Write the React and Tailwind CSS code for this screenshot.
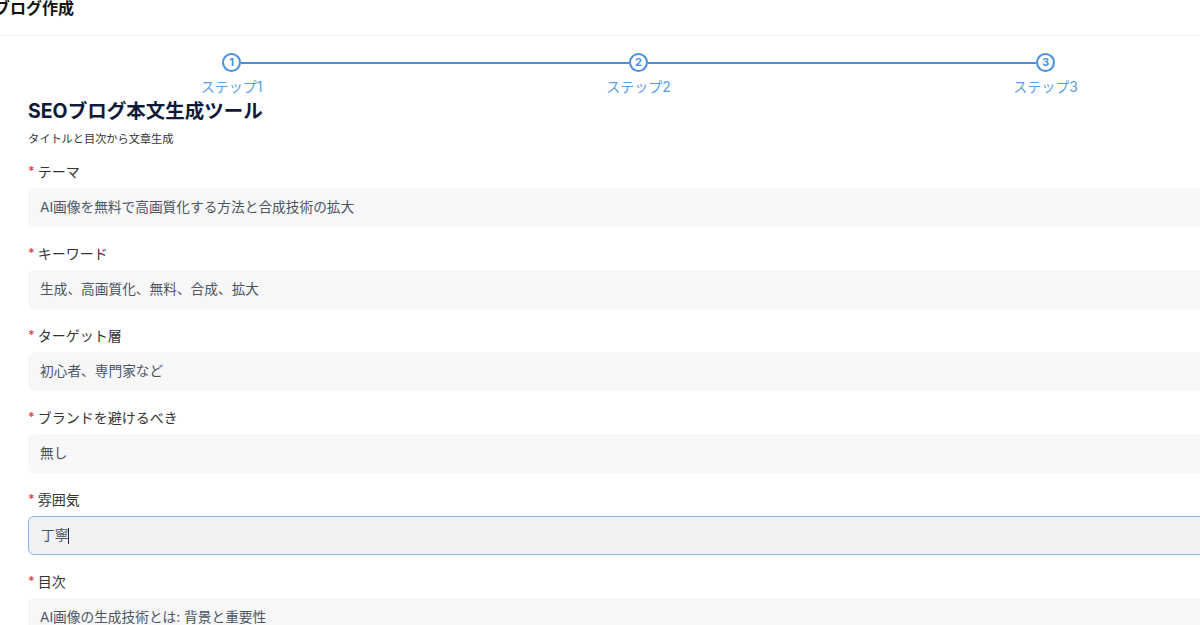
const steps = ["ステップ1", "ステップ2", "ステップ3"];

const fields = [
  { label: "テーマ", value: "AI画像を無料で高画質化する方法と合成技術の拡大" },
  { label: "キーワード", value: "生成、高画質化、無料、合成、拡大" },
  { label: "ターゲット層", value: "初心者、専門家など" },
  { label: "ブランドを避けるべき", value: "無し" },
  { label: "雰囲気", value: "丁寧", focused: true },
  { label: "目次", value: "AI画像の生成技術とは: 背景と重要性" },
];

function Stepper() {
  return (
    <div className="flex pt-[17px]">
      {steps.map((s, i) => (
        <div key={s} className="w-[407px] flex flex-col items-center">
          <div className="w-full flex items-center">
            <div className={i === 0 ? "flex-1" : "flex-1 h-[2px] bg-[#4a90e2]"} />
            <div className="w-[19px] h-[19px] rounded-full border-2 border-[#4a90e2] flex items-center justify-center text-[11px] font-bold text-[#4a90e2] leading-none">
              {i + 1}
            </div>
            <div className={i === steps.length - 1 ? "flex-1" : "flex-1 h-[2px] bg-[#4a90e2]"} />
          </div>
          <div className="mt-[5px] text-[14px] leading-5 text-[#5a9ee6]">{s}</div>
        </div>
      ))}
    </div>
  );
}

function Field({ label, value, focused }) {
  return (
    <div className="mb-[16px]">
      <div className="h-5 flex items-center text-[14px] text-[#333] mb-[7px]">
        <span className="text-[#e5484d] text-[12px] mr-[3px] font-bold">*</span>
        {label}
      </div>
      <div
        className={
          focused
            ? "h-[39px] rounded-md border border-[#8ab8ea] bg-[#f0f1f3] px-3 flex items-center text-[13.7px] text-[#4b5563]"
            : "h-[39px] rounded-md bg-[#f7f7f7] px-3 flex items-center text-[13.7px] text-[#4b5563]"
        }
      >
        {value}
        {focused && <span className="inline-block w-px h-[16px] bg-[#1f2937]" />}
      </div>
    </div>
  );
}

export default function App() {
  return (
    <div className="w-full h-[625px] overflow-hidden bg-white font-['Inter','Noto_Sans_CJK_JP',sans-serif]">
      <div className="h-[36px] border-b border-[#f0f0f0]">
        <div className="-ml-[6px] text-[16px] font-bold leading-[16px] text-[#111]">ブログ作成</div>
      </div>
      <div className="pl-7 w-[1260px]">
        <Stepper />
        <h1 className="text-[19.5px] leading-[28px] font-bold text-[#0f1a3a]">SEOブログ本文生成ツール</h1>
        <p className="mt-[6px] text-[11.2px] leading-4 text-[#333]">タイトルと目次から文章生成</p>
        <div className="mt-[14px]">
          {fields.map((f) => (
            <Field key={f.label} {...f} />
          ))}
        </div>
      </div>
    </div>
  );
}
